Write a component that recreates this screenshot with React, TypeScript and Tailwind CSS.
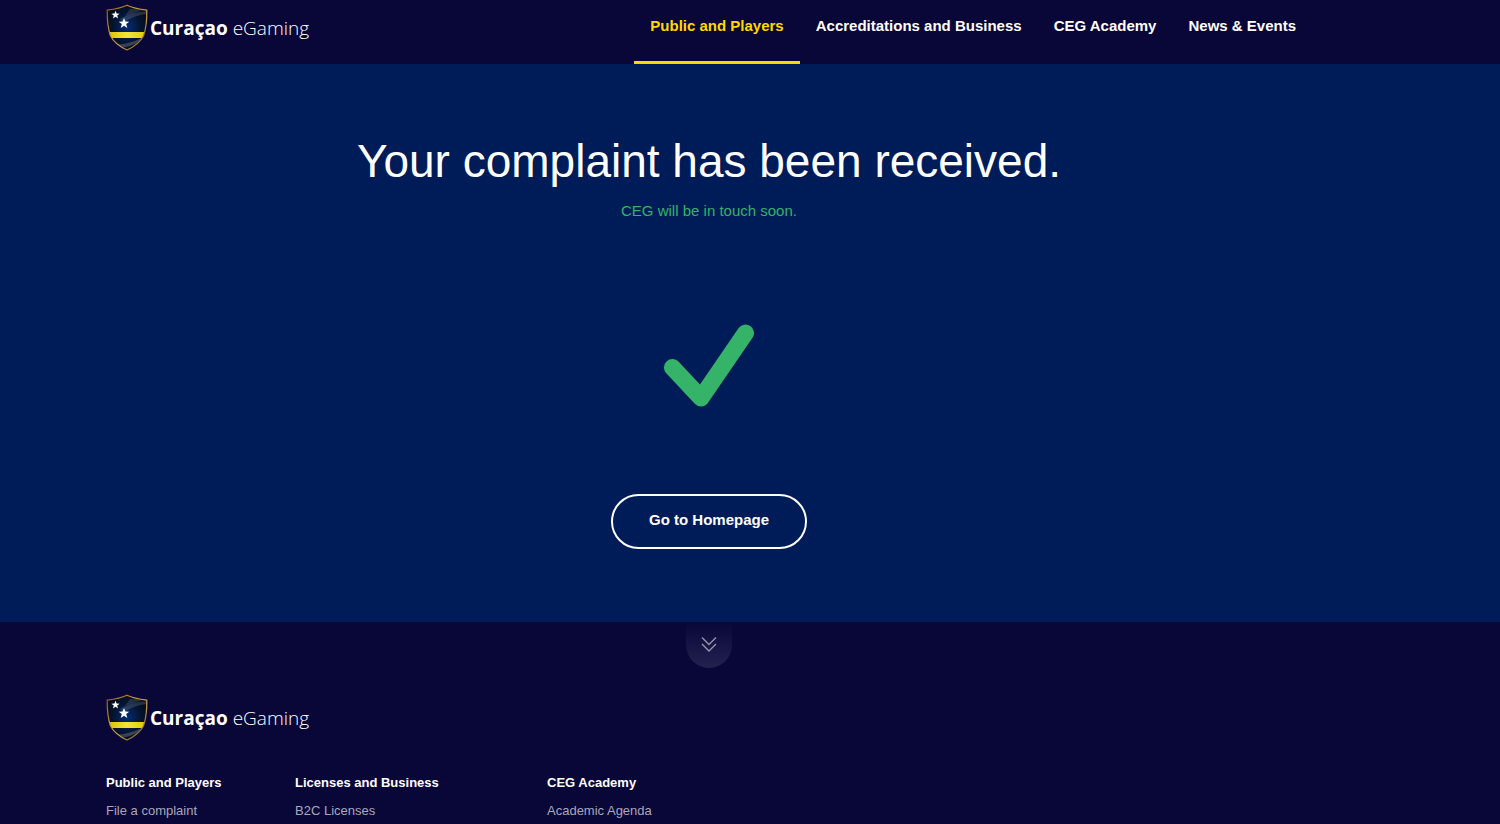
import React, { useId } from 'react';

const navItems = ['Public and Players', 'Accreditations and Business', 'CEG Academy', 'News & Events'];

const footerColumns = [
  { title: 'Public and Players', links: ['File a complaint'], width: 'w-[189px]' },
  { title: 'Licenses and Business', links: ['B2C Licenses'], width: 'w-[252px]' },
  { title: 'CEG Academy', links: ['Academic Agenda'], width: 'w-[189px]' },
];

const Shield = () => {
  const id = useId();
  const outline = 'M1.2 6.2 Q14 4.5 21 1.2 Q28 4.5 40.8 6.2 C41 17 39.5 26 37.5 32 Q33 40.5 21 46 Q9 40.5 4.5 32 C2.5 26 1 17 1.2 6.2Z';
  const star = 'M0 -5.5 L1.4 -1.8 L5.3 -1.7 L2.2 .7 L3.3 4.5 L0 2.3 L-3.3 4.5 L-2.2 .7 L-5.3 -1.7 L-1.4 -1.8Z';

  return (
    <svg width="42" height="47" viewBox="0 0 42 47" aria-hidden="true">
      <defs>
        <linearGradient id={`${id}gold`} x1="0" y1="0" x2="1" y2="1">
          <stop offset="0" stopColor="#8a5a18" />
          <stop offset=".35" stopColor="#c4903c" />
          <stop offset=".6" stopColor="#c9a455" />
          <stop offset="1" stopColor="#7a4c12" />
        </linearGradient>
        <radialGradient id={`${id}blue`} cx=".5" cy=".5" r=".6">
          <stop offset="0" stopColor="#052c75" />
          <stop offset=".55" stopColor="#04142f" />
          <stop offset="1" stopColor="#05080f" />
        </radialGradient>
        <linearGradient id={`${id}band`}>
          <stop offset="0" stopColor="#d6bd00" />
          <stop offset=".5" stopColor="#f2e63c" />
          <stop offset="1" stopColor="#dccb00" />
        </linearGradient>
        <clipPath id={`${id}clip`}>
          <path d={outline} />
        </clipPath>
      </defs>
      <g clipPath={`url(#${id}clip)`}>
        <rect width="42" height="47" fill={`url(#${id}blue)`} />
        <path d="M14 15 Q25 8 41 7 V10 Q28 11 17 19Z" fill="#fff" opacity=".14" />
        <path d="M24 5 Q31 4 37 6 L19 12Z" fill="#fff" opacity=".12" />
        <path d="M0 28 H42 V34 H0Z" fill={`url(#${id}band)`} />
        <path d="M9 41 Q23 40 36 34 L33 38 Q24 43 14 44Z" fill="#fff" opacity=".2" />
      </g>
      <path d={outline} fill="none" stroke={`url(#${id}gold)`} strokeWidth="1.2" />
      <path d={star} fill="#fff" transform="translate(9.5 11) scale(.78)" />
      <path d={star} fill="#fff" transform="translate(18 19.4)" />
    </svg>
  );
};

const Logo = () => {
  return (
    <a href="#" aria-label="Curaçao eGaming" className="flex items-center gap-0.5 text-white">
      <Shield />
      <span className="whitespace-nowrap font-['Open_Sans','Noto_Sans',sans-serif] text-[19px] leading-7">
        <span className="font-bold">Curaçao</span> <span className="font-light">eGaming</span>
      </span>
    </a>
  );
};

const Header = () => {
  return (
    <header className="bg-[#090638] pr-[82px]">
      <div className="mx-auto flex h-16 max-w-[1206px] justify-between">
        <div className="pt-1">
          <Logo />
        </div>
        <nav className="flex">
          {navItems.map((item, i) => (
            <a
              key={item}
              href="#"
              className={
                i === 0
                  ? 'border-b-3 border-[#ffd800] px-4 pt-4 text-[15px] leading-5 font-bold whitespace-nowrap text-[#ffd800]'
                  : 'px-4 pt-4 text-[15px] leading-5 font-bold whitespace-nowrap'
              }
            >
              {item}
            </a>
          ))}
        </nav>
      </div>
    </header>
  );
};

const Confirmation = () => {
  return (
    <main className="flex flex-col items-center bg-[#001c58] pt-[69px] pr-[82px] pb-[73px] text-center">
      <h1 className="text-[46px] leading-[56px]">Your complaint has been received.</h1>
      <p className="mt-2.5 text-[15px] leading-6 text-[#35b368]">CEG will be in touch soon.</p>
      <svg width="90" height="84" viewBox="0 0 90 84" className="mt-[101px]" role="img" aria-label="Success">
        <path
          d="M8.5 43.5 L37 74 L81.5 9"
          fill="none"
          stroke="#35b368"
          strokeWidth="17"
          strokeLinecap="round"
          strokeLinejoin="round"
        />
      </svg>
      <button
        type="button"
        className="mt-[86px] h-[55px] rounded-full border-2 border-white px-9 pb-1 text-[15px] leading-5 font-bold"
      >
        Go to Homepage
      </button>
    </main>
  );
};

const Footer = () => {
  return (
    <footer className="pr-[82px]">
      <div className="flex justify-center">
        <button
          type="button"
          aria-label="Scroll down"
          className="flex h-[46px] w-[46px] items-center justify-center rounded-b-full bg-linear-to-b from-[#090638] to-[#242150] pb-0.5"
        >
          <svg width="16" height="16" viewBox="0 0 16 16" fill="none" stroke="#9593ad" strokeWidth="1.4">
            <path d="M1 1.5 L8 8.5 L15 1.5 M1 8 L8 15 L15 8" />
          </svg>
        </button>
      </div>
      <div className="mx-auto max-w-[1206px] pt-[26px]">
        <Logo />
        <div className="mt-8 flex text-[13px] leading-5">
          {footerColumns.map((column) => (
            <div key={column.title} className={column.width}>
              <h2 className="font-bold">{column.title}</h2>
              <ul className="mt-2">
                {column.links.map((link) => (
                  <li key={link}>
                    <a href="#" className="text-[#a9a8bb]">
                      {link}
                    </a>
                  </li>
                ))}
              </ul>
            </div>
          ))}
        </div>
      </div>
    </footer>
  );
};

const App = () => {
  return (
    <div className="min-h-screen bg-[#090638] font-['Liberation_Sans',Arial,sans-serif] text-white">
      <Header />
      <Confirmation />
      <Footer />
    </div>
  );
};

export default App;
